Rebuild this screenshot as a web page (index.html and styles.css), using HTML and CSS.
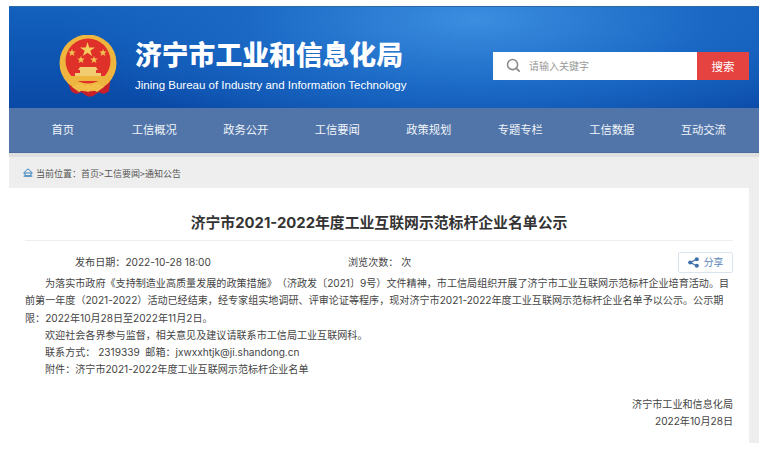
FILE: index.html
```html
<!DOCTYPE html>
<html lang="zh-CN">
<head>
  <meta charset="UTF-8">
  <title>济宁市工业和信息化局</title>
  <link rel="stylesheet" href="styles.css">
</head>
<body>
  <div class="page">
    <header class="banner">
      <svg class="emblem" viewBox="0 0 60 62" aria-hidden="true">
        <path d="M7 40h46l-2 16q-5 5-10 1l-6 4q-3 1-6 0l-6-4q-5 4-10-1z" fill="#c8202a"/>
        <circle cx="30" cy="28" r="28.5" fill="#eeb63f"/>
        <circle cx="30" cy="26" r="22.5" fill="#e0302a"/>
        <polygon points="29.5,7 31.2,12.4 37,12.4 32.3,15.7 34.1,21 29.5,17.8 24.9,21 26.7,15.7 22,12.4 27.8,12.4" fill="#f4cf5e"/>
        <polygon points="14,14 15,16.6 17.8,16.6 15.6,18.3 16.4,21 14,19.4 11.6,21 12.4,18.3 10.2,16.6 13,16.6" fill="#f0c050"/>
        <polygon points="45,14 46,16.6 48.8,16.6 46.6,18.3 47.4,21 45,19.4 42.6,21 43.4,18.3 41.2,16.6 44,16.6" fill="#f0c050"/>
        <polygon points="23,21 24,23.6 26.8,23.6 24.6,25.3 25.4,28 23,26.4 20.6,28 21.4,25.3 19.2,23.6 22,23.6" fill="#f0c050"/>
        <polygon points="36,21 37,23.6 39.8,23.6 37.6,25.3 38.4,28 36,26.4 33.6,28 34.4,25.3 32.2,23.6 35,23.6" fill="#f0c050"/>
        <path d="M22 32h16l2 3h-2v3h5v3H17v-3h5v-3h-2z" fill="#f2cc70"/>
        <path d="M11 41h38l-3 5H14z" fill="#eeb63f"/>
        <path d="M14 52l8-4 5 3 3-2 3 2 5-3 8 4-7 5-5-3-4 3-4-3-5 3z" fill="#f2c04a"/>
      </svg>
      <div class="brand">
        <h1>济宁市工业和信息化局</h1>
        <p>Jining Bureau of Industry and Information Technology</p>
      </div>
      <form class="search">
        <svg class="search-icon" viewBox="0 0 16 16" aria-hidden="true">
          <circle cx="7" cy="7" r="5.4" fill="none" stroke="#8a8a8a" stroke-width="1.7"/>
          <path d="M11 11l3.6 3.6" stroke="#8a8a8a" stroke-width="1.9" fill="none"/>
        </svg>
        <span class="search-hint">请输入关键字</span>
        <button type="button">搜索</button>
      </form>
    </header>

    <nav class="nav">
      <a>首页</a>
      <a>工信概况</a>
      <a>政务公开</a>
      <a>工信要闻</a>
      <a>政策规划</a>
      <a>专题专栏</a>
      <a>工信数据</a>
      <a>互动交流</a>
    </nav>

    <div class="crumbs">
      <svg class="home" viewBox="0 0 10 9" aria-hidden="true">
        <path d="M5 .8L9.4 5H.6z M2 5v2.8h6V5" fill="none" stroke="#3b83bd" stroke-width="1"/>
        <path d="M.6 8.2h8.8" stroke="#3b83bd" stroke-width="1"/>
      </svg>
      <span>当前位置：首页&gt;工信要闻&gt;通知公告</span>
    </div>

    <div class="body-wrap">
      <main class="article">
        <h2>济宁市2021-2022年度工业互联网示范标杆企业名单公示</h2>
        <div class="meta">
          <span class="date">发布日期：2022-10-28 18:00</span>
          <span class="views">浏览次数： 次</span>
          <a class="share">
            <svg viewBox="0 0 12 12" aria-hidden="true">
              <path d="M9.5 2.5L2.5 6l7 3.5" fill="none" stroke="#3d6fa8" stroke-width="1.4"/>
              <circle cx="9.6" cy="2.4" r="2.2" fill="#3d6fa8"/>
              <circle cx="2.4" cy="6" r="2.2" fill="#3d6fa8"/>
              <circle cx="9.6" cy="9.6" r="2.2" fill="#3d6fa8"/>
            </svg>
            分享
          </a>
        </div>
        <div class="content">
          <p>为落实市政府《支持制造业高质量发展的政策措施》（济政发〔2021〕9号）文件精神，市工信局组织开展了济宁市工业互联网示范标杆企业培育活动。目前第一年度（2021-2022）活动已经结束，经专家组实地调研、评审论证等程序，现对济宁市2021-2022年度工业互联网示范标杆企业名单予以公示。公示期限：2022年10月28日至2022年11月2日。</p>
          <p>欢迎社会各界参与监督，相关意见及建议请联系市工信局工业互联网科。</p>
          <p>联系方式： 2319339&nbsp; 邮箱：jxwxxhtjk@ji.shandong.cn</p>
          <p>附件：济宁市2021-2022年度工业互联网示范标杆企业名单</p>
        </div>
        <div class="sign">
          <div>济宁市工业和信息化局</div>
          <div>2022年10月28日</div>
        </div>
      </main>
      <div class="side-strip"></div>
    </div>
  </div>
</body>
</html>
```

FILE: styles.css
```css
html, body {
  margin: 0;
  padding: 0;
  background-color: #fff;
}
body {
  font-family: "Noto Sans CJK SC", "Liberation Sans", sans-serif;
  color: #444;
}
.page {
  width: 750px;
  margin: 6px 0 0 9px;
}
.banner {
  height: 102px;
  display: flex;
  align-items: center;
  background: radial-gradient(ellipse 420px 130px at 62% 12%, #3b8ee0 0%, #1a68c4 55%, transparent 100%), linear-gradient(180deg, #1261bd, #0a49a6);
  border-top: 1px solid #2a6aa8;
  box-sizing: border-box;
}
.emblem {
  width: 60px;
  height: 62px;
  margin: 16px 0 0 49px;
}
.brand {
  margin: 14px 0 0 17px;
  color: #fff;
}
.brand h1 {
  margin: 0;
  font-size: 26.8px;
  line-height: 36px;
  font-weight: 900;
  white-space: nowrap;
}
.brand p {
  margin: 5px 0 0;
  font-family: "Liberation Sans", sans-serif;
  font-size: 11.5px;
  line-height: 16px;
  white-space: nowrap;
}
.search {
  margin: 16px 10px 0 auto;
  width: 256px;
  height: 28px;
  flex: none;
  display: flex;
  align-items: center;
  background-color: #fff;
}
.search-icon {
  width: 15px;
  height: 15px;
  margin-left: 13px;
}
.search-hint {
  margin-left: 8px;
  flex: 1;
  font-size: 10px;
  color: #999;
}
.search button {
  width: 52px;
  height: 28px;
  padding: 0;
  border: none;
  background-color: #e5433f;
  color: #fff;
  font-family: inherit;
  font-size: 11.5px;
}
.nav {
  height: 45px;
  padding-left: 8px;
  display: flex;
  background-color: #5175a9;
  box-shadow: inset 0 -1px 0 #4a6b9c;
}
.nav a {
  width: 91.5px;
  text-align: center;
  line-height: 43px;
  font-size: 11.3px;
  color: #f2f5fa;
}
.crumbs {
  height: 31px;
  display: flex;
  align-items: center;
  border-top: 4px solid #dfdfdf;
  background-color: #eeeeee;
  font-size: 9px;
  color: #555;
}
.home {
  width: 10px;
  height: 9px;
  margin: 0 3px 0 14px;
}
.crumbs span {
  position: relative;
  top: 1px;
}
.body-wrap {
  display: flex;
}
.article {
  flex: none;
  padding-left: 16px;
  width: 708px;
  height: 255px;
  font-family: Inter, "Noto Sans CJK SC", sans-serif;
  text-spacing-trim: space-all;
}
.side-strip {
  width: 10px;
  margin-left: 16px;
  height: 255px;
  background-color: #eeeeee;
}
.article h2 {
  margin: 0;
  height: 52px;
  line-height: 70px;
  font-size: 14.85px;
  font-weight: 700;
  color: #333;
  text-align: center;
  border-bottom: 1px solid #eee;
}
.meta {
  display: flex;
  align-items: center;
  height: 40px;
  padding-top: 1px;
  box-sizing: border-box;
  font-size: 10.08px;
}
.date {
  margin-left: 50px;
  width: 273px;
}
.views {
  flex: 1;
}
.share {
  width: 55px;
  height: 21px;
  margin-top: 1px;
  display: flex;
  align-items: center;
  justify-content: center;
  gap: 5px;
  border: 1px solid #dbe3ee;
  border-radius: 2px;
  font-size: 9.8px;
  color: #5a84b8;
  box-sizing: border-box;
}
.share svg {
  width: 11px;
  height: 11px;
}
.content {
  margin-top: -6px;
  font-size: 10.08px;
  line-height: 17.3px;
}
.content p {
  margin: 0;
  text-indent: 20px;
}
.sign {
  margin-top: 17px;
  text-align: right;
  font-size: 10.1px;
  line-height: 17.5px;
}
```
